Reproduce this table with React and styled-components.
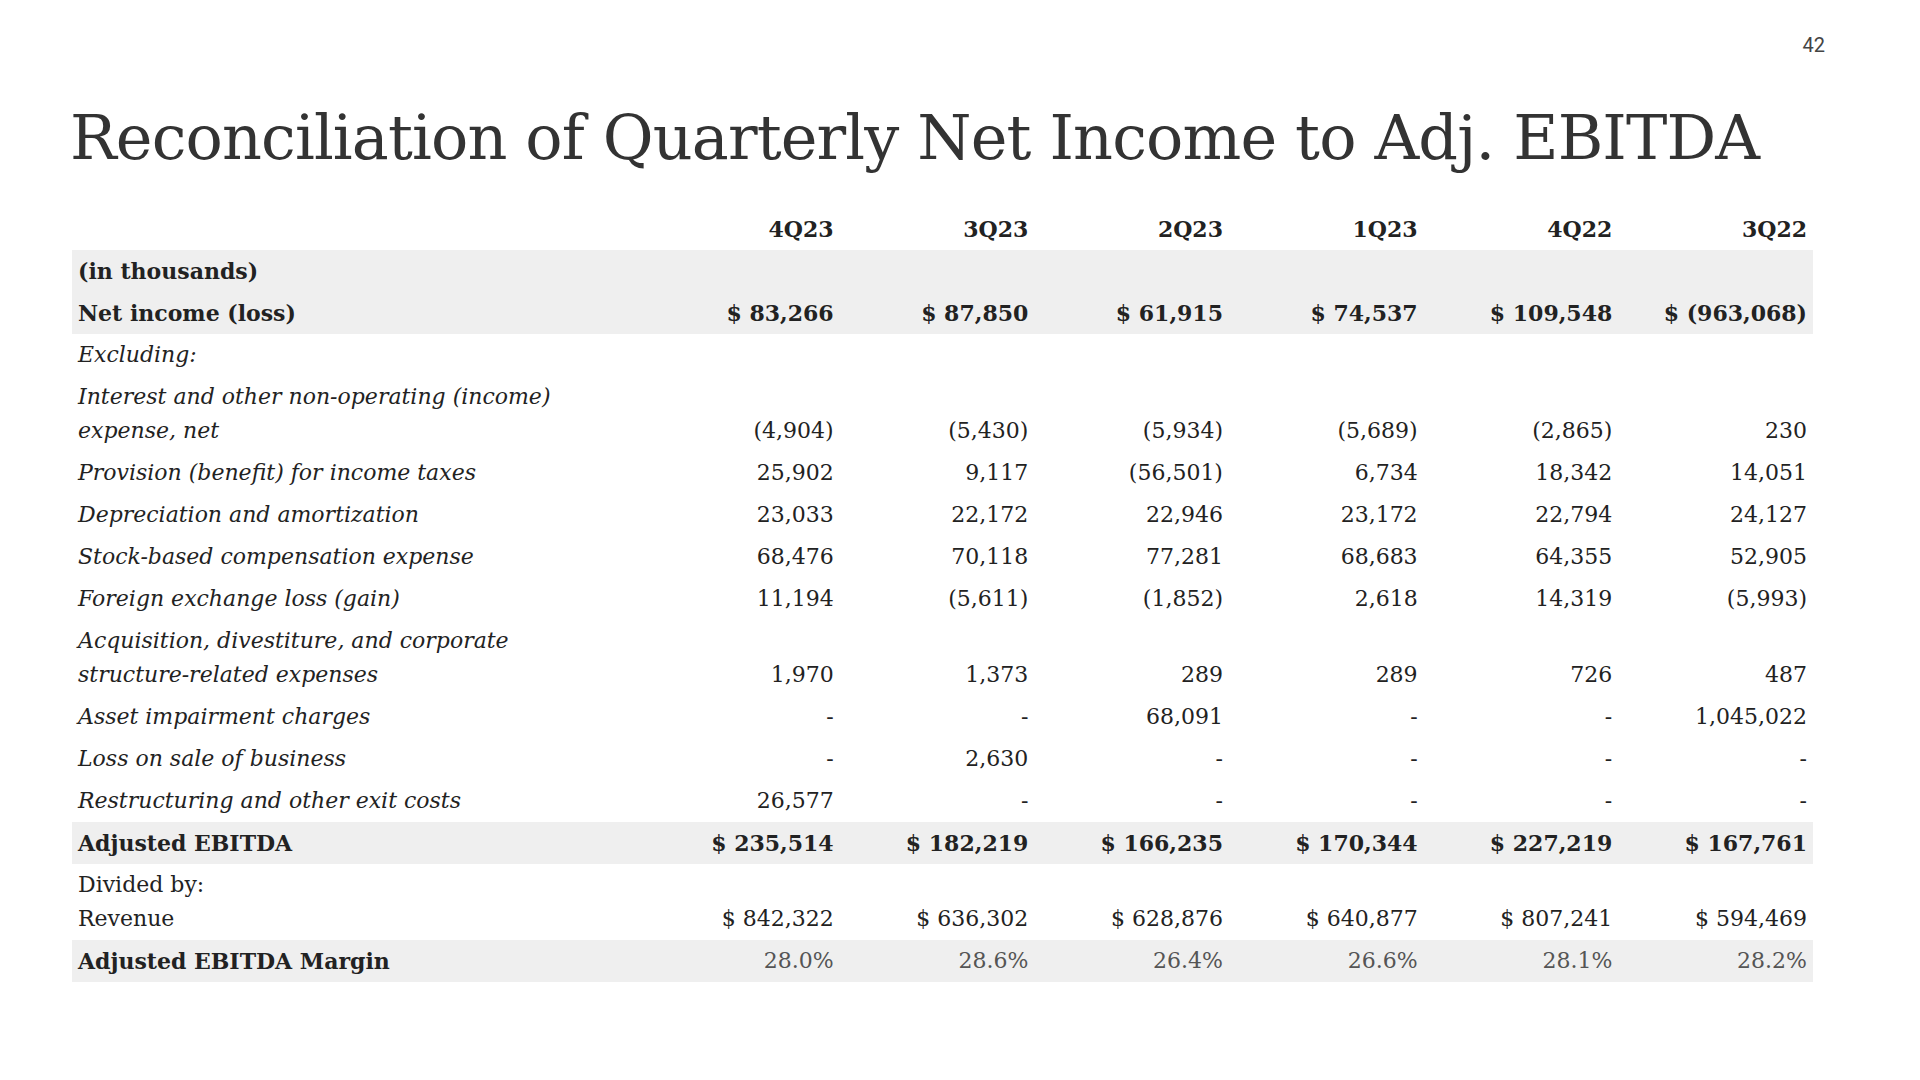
import React from 'react'
import styled, {createGlobalStyle} from 'styled-components'

const Global = createGlobalStyle`
html, body {
  margin:0;
  padding:0;
  background:#fff;
}
body {
  font-family:"DejaVu Serif", "Liberation Serif", serif;
  color:#222;
}
`

const quarters = ['4Q23', '3Q23', '2Q23', '1Q23', '4Q22', '3Q22']

const rows = [
  {label: '(in thousands)', kind: 'bold', band: true, values: []},
  {label: 'Net income (loss)', kind: 'bold', band: true, values: ['$ 83,266', '$ 87,850', '$ 61,915', '$ 74,537', '$ 109,548', '$ (963,068)']},
  {label: 'Excluding:', kind: 'italic', values: []},
  {label: ['Interest and other non-operating (income)', 'expense, net'], kind: 'italic', values: ['(4,904)', '(5,430)', '(5,934)', '(5,689)', '(2,865)', '230']},
  {label: 'Provision (benefit) for income taxes', kind: 'italic', values: ['25,902', '9,117', '(56,501)', '6,734', '18,342', '14,051']},
  {label: 'Depreciation and amortization', kind: 'italic', values: ['23,033', '22,172', '22,946', '23,172', '22,794', '24,127']},
  {label: 'Stock-based compensation expense', kind: 'italic', values: ['68,476', '70,118', '77,281', '68,683', '64,355', '52,905']},
  {label: 'Foreign exchange loss (gain)', kind: 'italic', values: ['11,194', '(5,611)', '(1,852)', '2,618', '14,319', '(5,993)']},
  {label: ['Acquisition, divestiture, and corporate', 'structure-related expenses'], kind: 'italic', values: ['1,970', '1,373', '289', '289', '726', '487']},
  {label: 'Asset impairment charges', kind: 'italic', values: ['-', '-', '68,091', '-', '-', '1,045,022']},
  {label: 'Loss on sale of business', kind: 'italic', values: ['-', '2,630', '-', '-', '-', '-']},
  {label: 'Restructuring and other exit costs', kind: 'italic', values: ['26,577', '-', '-', '-', '-', '-']},
  {label: 'Adjusted EBITDA', kind: 'bold', band: true, values: ['$ 235,514', '$ 182,219', '$ 166,235', '$ 170,344', '$ 227,219', '$ 167,761']},
  {label: ['Divided by:', 'Revenue'], kind: 'plain', values: ['$ 842,322', '$ 636,302', '$ 628,876', '$ 640,877', '$ 807,241', '$ 594,469']},
  {label: 'Adjusted EBITDA Margin', kind: 'bold', band: true, muted: true, values: ['28.0%', '28.6%', '26.4%', '26.6%', '28.1%', '28.2%']},
]

function App() {
  return (
    <Slide>
      <Global />
      <PageNumber>42</PageNumber>
      <Title>Reconciliation of Quarterly Net Income to Adj. EBITDA</Title>
      <Table>
        <colgroup>
          <col style={{width: '573px'}} />
          {quarters.map(q => <col key={q} />)}
        </colgroup>
        <thead>
          <tr>
            <HeadCell />
            {quarters.map(q => <HeadCell key={q}>{q}</HeadCell>)}
          </tr>
        </thead>
        <tbody>
          {rows.map((r, i) => (
            <Row key={i} $band={r.band}>
              <Label $kind={r.kind}>
                {Array.isArray(r.label) ? r.label.map((l, j) => <div key={j}>{l}</div>) : r.label}
              </Label>
              {quarters.map((q, j) => (
                <Value key={q} $bold={r.kind === 'bold'} $muted={r.muted}>{r.values[j] || ''}</Value>
              ))}
            </Row>
          ))}
        </tbody>
      </Table>
    </Slide>
  )
}

export default App

const Slide = styled.div`
width:1920px;
height:1080px;
box-sizing:border-box;
padding:30px 107px 0 72px;
position:relative;
overflow:hidden;
`

const PageNumber = styled.div`
margin-right:-12px;
text-align:right;
font-family:"Roboto", "Liberation Sans", sans-serif;
font-size:20px;
color:#444;
line-height:30px;
`

const Title = styled.h1`
margin:33px 0 0 -2px;
font-weight:normal;
font-size:62px;
line-height:90px;
color:#333;
white-space:nowrap;
letter-spacing:-0.86px;
`

const Table = styled.table`
margin-top:25px;
width:1741px;
border-collapse:collapse;
table-layout:fixed;
font-size:22px;
`

const HeadCell = styled.th`
height:42px;
padding:0 6px;
text-align:right;
font-weight:bold;
vertical-align:middle;
`

const Row = styled.tr`
background:${p => p.$band ? '#efefef' : 'transparent'};
`

const Label = styled.td`
padding:4px 6px;
line-height:34px;
font-weight:${p => p.$kind === 'bold' ? 'bold' : 'normal'};
font-style:${p => p.$kind === 'italic' ? 'italic' : 'normal'};
vertical-align:bottom;
white-space:nowrap;
`

const Value = styled.td`
padding:4px 6px;
line-height:34px;
text-align:right;
vertical-align:bottom;
white-space:nowrap;
font-weight:${p => p.$bold && !p.$muted ? 'bold' : 'normal'};
color:${p => p.$muted ? '#555' : '#222'};
`
